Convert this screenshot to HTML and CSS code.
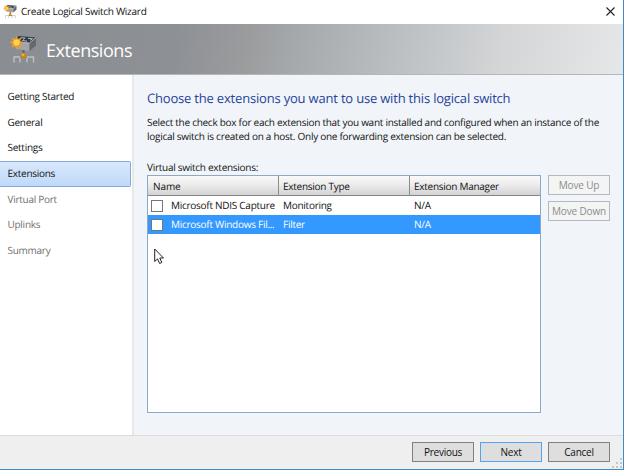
FILE: index.html
```html
<!DOCTYPE html>
<html lang="en">
<head>
<meta charset="utf-8">
<title>Create Logical Switch Wizard</title>
<link rel="stylesheet" href="styles.css">
</head>
<body>
<svg width="0" height="0" class="defs" aria-hidden="true">
  <symbol id="switch" viewBox="0 0 28 28">
    <path d="M5 27.500V22H11V27.500M18 27.500V22H24.500V27.500" fill="none" stroke="#bfc0c2" stroke-width="1.400"/>
    <path d="M11 22H18" stroke="#77797d" stroke-width="1.400"/>
    <path d="M14.500 15v4" stroke="#606368" stroke-width="2"/>
    <path d="M9.500 1L27 2.500L20.500 8L4.500 6.500Z" fill="#333c48"/>
    <path d="M12 2.700l4 .4-2 1.400M19 3.300l4.500 .4-2.500 1.700M13 5.600l5 .5" fill="none" stroke="#aebdca" stroke-width="1"/>
    <path d="M4.500 6.500L20.500 8V16L7 14Z" fill="#a3a4a7"/>
    <path d="M20.500 8L27 2.500V10.500L20.500 16Z" fill="#65686c"/>
    <path d="M4.500 6.500L20.500 8L27 2.500" fill="none" stroke="#c9cacc" stroke-width=".7"/>
    <circle cx="14.500" cy="20.500" r="2.800" fill="#c98a14"/>
    <circle cx="14" cy="19.800" r="1.300" fill="#eeb42c"/>
    <path d="M7.500 .7l1.400 3.400L12.500 2.600l-1.300 3.500L14.600 7.600l-3.400 1.500L12.500 12.600l-3.600-1.400L7.500 14.600l-1.400-3.400L2.500 12.600l1.300-3.500L.4 7.600l3.400-1.500L2.500 2.600l3.600 1.500Z" fill="#f59d1e"/>
    <circle cx="7.500" cy="7.600" r="3" fill="#ffd45c"/>
  </symbol>
</svg>
<div class="window">
  <header class="titlebar">
    <svg class="app-icon"><use href="#switch"/></svg>
    <span class="caption">Create Logical Switch Wizard</span>
    <svg class="close" viewBox="0 0 9 9"><path d="M.5.5l8 8M8.500.5l-8 8"/></svg>
  </header>
  <div class="banner">
    <svg class="banner-icon"><use href="#switch"/></svg>
    <h1>Extensions</h1>
  </div>
  <div class="body">
    <nav class="steps">
      <a class="step">Getting Started</a>
      <a class="step">General</a>
      <a class="step">Settings</a>
      <a class="step current">Extensions</a>
      <a class="step pending">Virtual Port</a>
      <a class="step pending">Uplinks</a>
      <a class="step pending">Summary</a>
    </nav>
    <main class="content">
      <h2>Choose the extensions you want to use with this logical switch</h2>
      <p class="intro">Select the check box for each extension that you want installed and configured when an instance of the<br>logical switch is created on a host. Only one forwarding extension can be selected.</p>
      <div class="label">Virtual switch extensions:</div>
      <div class="picker">
        <div class="grid">
          <div class="row head"><span class="cell wide">Name</span><span class="cell">Extension Type</span><span class="cell">Extension Manager</span></div>
          <div class="row"><span class="cell"><i class="check"></i>Microsoft NDIS Capture</span><span class="cell">Monitoring</span><span class="cell">N/A</span></div>
          <div class="row selected"><span class="cell"><i class="check"></i>Microsoft Windows Fil...</span><span class="cell">Filter</span><span class="cell">N/A</span></div>
          <svg class="cursor" viewBox="0 0 11 17"><path d="M.7 1V13.500L3.500 10.900L5.600 15.500L7.800 14.500L5.800 10H9.500Z"/></svg>
        </div>
        <div class="order">
          <button class="btn" disabled>Move Up</button>
          <button class="btn" disabled>Move Down</button>
        </div>
      </div>
    </main>
  </div>
  <footer class="footer">
    <button class="btn">Previous</button>
    <button class="btn default">Next</button>
    <button class="btn">Cancel</button>
    <svg class="grip" viewBox="0 0 10 10"><path d="M8 0h2v2h-2zM4 4h2v2h-2zM8 4h2v2h-2zM0 8h2v2h-2zM4 8h2v2h-2zM8 8h2v2h-2z"/></svg>
  </footer>
</div>
</body>
</html>
```
FILE: styles.css
```css
* { box-sizing: border-box; }
body {
  margin: 0;
  background: #fff;
  color: #111;
  font: 10px/14px "Open Sans", "Noto Sans", sans-serif;
  letter-spacing: -0.27px;
  text-rendering: geometricPrecision;
}
.defs { position: absolute; }
h1, h2, p { margin: 0; font-weight: 400; }
.window {
  width: 624px;
  height: 470px;
  display: flex;
  flex-direction: column;
  border-right: 1px solid #3c8bcb;
  border-bottom: 1px solid #3c8bcb;
  white-space: nowrap;
}
.titlebar {
  height: 24px;
  display: flex;
  align-items: center;
  padding: 0 8px 2px 3px;
}
.app-icon { width: 14px; height: 15px; margin-right: 4px; }
.caption { flex: 1; }
.close { width: 9px; height: 9px; fill: none; stroke: #222; stroke-width: 1.1; }
.banner {
  height: 51px;
  display: flex;
  align-items: center;
  padding-left: 9px;
  background: linear-gradient(100deg, #8a8d92 0, #8d9095 28%, #9b9c9e 40%, #a3a7aa 46%, #b9bdbf 62%, #d3d5d7 80%, #e6e7e8 100%);
  border-bottom: 1px solid #b4b6b8;
}
.banner-icon { width: 28px; height: 28px; margin-right: 9px; }
.banner h1 { padding-top: 3px; color: #fff; font-size: 18px; line-height: 24px; letter-spacing: -0.45px; }
.body { height: 360px; display: flex; }
.steps {
  flex: none;
  width: 134px;
  padding-top: 9px;
  border-right: 2px solid #e6e9eb;
}
.step {
  display: block;
  width: 131px;
  height: 25.700px;
  padding-left: 7.500px;
  line-height: 24px;
}
.current {
  background: linear-gradient(#d9e8fc, #bfd9fa);
  border: 1px solid #84a9d8;
  border-left: 0;
  border-radius: 0 2px 2px 0;
  line-height: 22px;
}
.pending { color: #707070; }
.content { flex: 1; min-width: 0; padding: 14px 0 0 13px; background: #f1f5f9; }
.content h2 { color: #25439a; font-size: 13px; line-height: 18px; letter-spacing: -0.19px; }
.intro { margin-top: 9px; line-height: 13.500px; }
.label { margin-top: 17px; height: 15px; }
.picker { display: flex; gap: 7px; }
.grid {
  position: relative;
  width: 394px;
  height: 238px;
  border: 1px solid #8aa9cb;
  background: #fff;
}
.row { display: grid; grid-template-columns: 130px 131px 1fr; height: 19px; line-height: 19px; }
.cell { display: flex; align-items: center; padding-left: 5px; }
.head {
  height: 20px;
  background: linear-gradient(#fafafa, #ececec 45%, #d3d3d3);
  border-bottom: 1px solid #858585;
}
.head .cell { padding-top: 1px; }
.head .cell + .cell { border-left: 1px solid #8b8b8b; padding-left: 4px; }
.head .wide { letter-spacing: -0.1px; }
.selected { background: #3399ff; color: #fff; }
.check { width: 12px; height: 12px; margin: 0 8px 0 -2px; border: 1px solid #767676; background: #fff; }
.cursor { position: absolute; left: 6px; top: 72px; width: 11px; height: 17px; fill: #fff; stroke: #222; stroke-width: 1; }
.order { display: flex; flex-direction: column; gap: 6px; }
.btn {
  width: 62px;
  height: 20px;
  padding: 0;
  border: 1px solid #808080;
  background: #dedede;
  color: #111;
  font: inherit;
  letter-spacing: inherit;
  line-height: 16px;
}
.btn:disabled { border-color: #b4b9bd; background: #f3f4f4; color: #8c8c8c; letter-spacing: -0.15px; }
.footer {
  position: relative;
  height: 34px;
  display: flex;
  justify-content: flex-end;
  gap: 6px;
  padding: 6px 13px 0 0;
  border-top: 1px solid #dcdcdc;
  background: #efefef;
}
.footer .default { border-color: #55a2ee; }
.grip { position: absolute; right: 1px; bottom: 1px; width: 10px; height: 10px; fill: #c2c7ce; }
```
